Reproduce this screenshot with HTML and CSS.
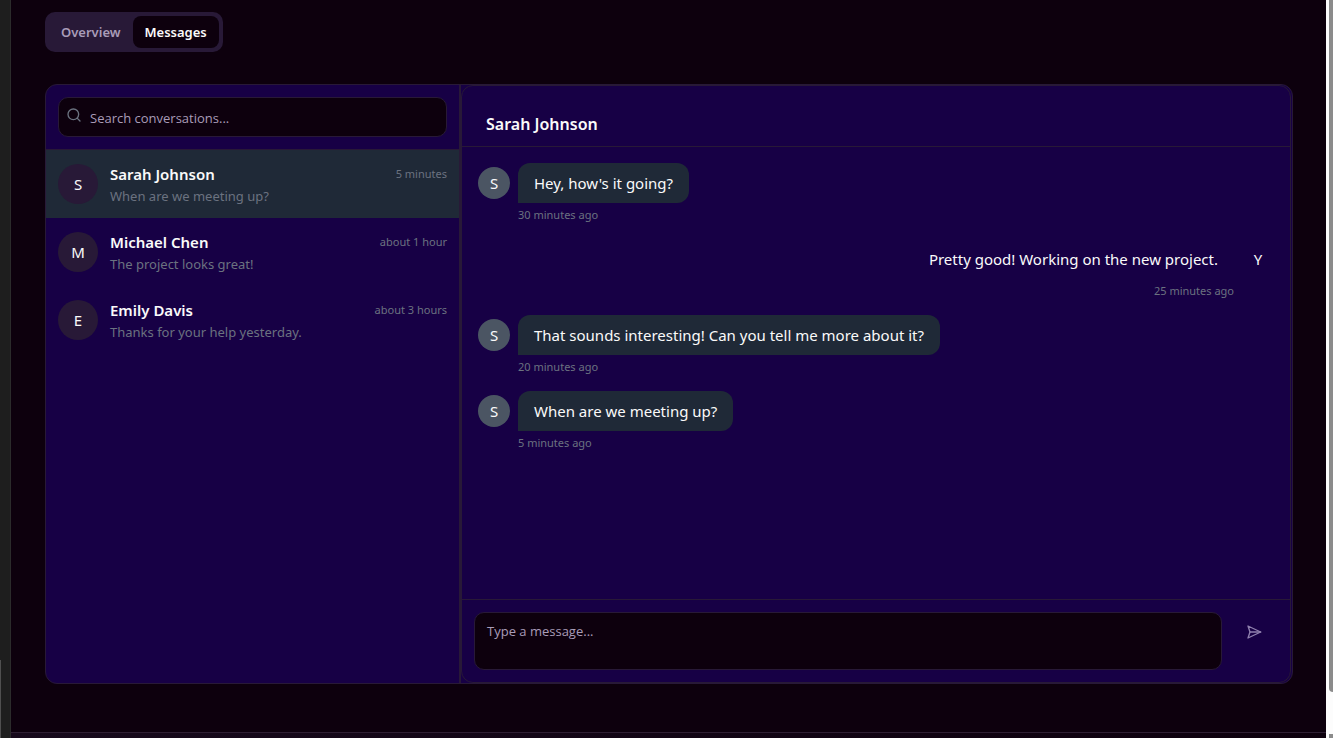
FILE: index.html
```html
<!DOCTYPE html>
<html lang="en">
<head>
<meta charset="utf-8">
<meta name="viewport" content="width=device-width, initial-scale=1">
<title>Messages</title>
<link rel="stylesheet" href="styles.css">
</head>
<body>
<div class="app">
  <div class="rail"><span class="rail-thumb"></span></div>
  <main class="page">
    <nav class="tabs" role="tablist">
      <button class="tab" type="button" role="tab" aria-selected="false">Overview</button>
      <button class="tab tab-active" type="button" role="tab" aria-selected="true">Messages</button>
    </nav>
    <section class="messenger">
      <aside class="sidebar">
        <div class="search">
          <svg class="search-icon" viewBox="0 0 24 24" aria-hidden="true"><circle cx="11" cy="11" r="8"/><path d="m21 21-4.3-4.3"/></svg>
          <input class="search-input" type="text" placeholder="Search conversations..." aria-label="Search conversations">
        </div>
        <ul class="conversations">
          <li class="conversation conversation-active">
            <span class="avatar">S</span>
            <div class="summary">
              <div class="summary-top"><span class="name">Sarah Johnson</span><span class="when">5 minutes</span></div>
              <p class="preview">When are we meeting up?</p>
            </div>
          </li>
          <li class="conversation">
            <span class="avatar">M</span>
            <div class="summary">
              <div class="summary-top"><span class="name">Michael Chen</span><span class="when">about 1 hour</span></div>
              <p class="preview">The project looks great!</p>
            </div>
          </li>
          <li class="conversation">
            <span class="avatar">E</span>
            <div class="summary">
              <div class="summary-top"><span class="name">Emily Davis</span><span class="when">about 3 hours</span></div>
              <p class="preview">Thanks for your help yesterday.</p>
            </div>
          </li>
        </ul>
      </aside>
      <section class="chat">
        <header class="chat-header"><h2 class="chat-title">Sarah Johnson</h2></header>
        <div class="thread">
          <article class="message">
            <span class="avatar avatar-small">S</span>
            <div class="message-body"><p class="bubble">Hey, how's it going?</p><span class="time">30 minutes ago</span></div>
          </article>
          <article class="message message-own">
            <span class="avatar avatar-small">Y</span>
            <div class="message-body"><p class="bubble">Pretty good! Working on the new project.</p><span class="time">25 minutes ago</span></div>
          </article>
          <article class="message">
            <span class="avatar avatar-small">S</span>
            <div class="message-body"><p class="bubble">That sounds interesting! Can you tell me more about it?</p><span class="time">20 minutes ago</span></div>
          </article>
          <article class="message">
            <span class="avatar avatar-small">S</span>
            <div class="message-body"><p class="bubble">When are we meeting up?</p><span class="time">5 minutes ago</span></div>
          </article>
        </div>
        <form class="composer">
          <textarea class="composer-input" placeholder="Type a message..." aria-label="Type a message"></textarea>
          <button class="send" type="button" aria-label="Send message">
            <svg class="send-icon" viewBox="0 0 24 24" aria-hidden="true"><path d="m3 3 3 9-3 9 19-9Z"/><path d="M6 12h16"/></svg>
          </button>
        </form>
      </section>
    </section>
    <footer class="footer"></footer>
  </main>
  <div class="scrollbar"><span class="scroll-thumb"></span><span class="scroll-end"></span></div>
</div>
</body>
</html>
```
FILE: styles.css
```css
:root {
  --bg: #0d000d;
  --panel: #170045;
  --line: #281937;
  --muted: #6b7280;
  --soft: #a99cb8;
  --active: #1f2937;
}

* { box-sizing: border-box; }

body {
  margin: 0;
  background: var(--bg);
  color: #fafafa;
  font-family: "Segoe UI", "Noto Sans", "Open Sans", sans-serif;
  font-size: 15px;
  line-height: 24px;
}

button, input, textarea { font: inherit; color: inherit; }
p, h2, ul { margin: 0; padding: 0; }

.app {
  display: flex;
  min-height: 100vh;
}

.rail {
  display: flex;
  align-items: flex-end;
  flex: 0 0 11px;
  background: #1e1e1e;
  border-right: 1px solid #2b2b2b;
}

.rail-thumb {
  width: 1px;
  height: 78px;
  background: #4f4f4f;
}

.page {
  display: flex;
  flex-direction: column;
  align-items: stretch;
  flex: 1;
  min-width: 0;
  padding-top: 12px;
}

.tabs {
  display: flex;
  align-self: flex-start;
  margin: 0 34px 32px;
  padding: 4px;
  background: var(--line);
  border-radius: 10px;
}

.tab {
  height: 32px;
  padding: 0 12px;
  border: 0;
  border-radius: 8px;
  background: transparent;
  color: var(--soft);
  font-size: 13px;
  font-weight: 600;
  line-height: 20px;
}

.tab-active {
  background: var(--bg);
  color: #fafafa;
}

.messenger {
  display: grid;
  grid-template-columns: 1fr 2fr;
  min-height: 600px;
  margin: 0 33px 48px 34px;
  padding-right: 1px;
  overflow: hidden;
  background: var(--panel);
  border: 1px solid var(--line);
  border-radius: 12px;
}

.sidebar { border-right: 2px solid var(--line); }

.search {
  position: relative;
  padding: 12px;
  border-bottom: 1px solid var(--line);
}

.search-icon {
  position: absolute;
  top: 22px;
  left: 20px;
  width: 16px;
  height: 16px;
  fill: none;
  stroke: var(--muted);
  stroke-width: 2;
  stroke-linecap: round;
  stroke-linejoin: round;
}

.search-input {
  display: block;
  width: 100%;
  height: 40px;
  padding: 1px 12px 0 31px;
  background: var(--bg);
  border: 1px solid var(--line);
  border-radius: 10px;
}

.search-input,
.composer-input {
  font-family: "Segoe UI", "Open Sans", "Noto Sans", sans-serif;
  font-size: 13px;
  line-height: 20px;
}

.search-input::placeholder,
.composer-input::placeholder {
  color: var(--soft);
  opacity: 1;
}

.conversations { list-style: none; }

.conversation {
  display: flex;
  align-items: center;
  gap: 12px;
  height: 68px;
  padding: 12px;
}

.conversation-active { background: var(--active); }

.avatar {
  display: flex;
  align-items: center;
  justify-content: center;
  flex: none;
  width: 40px;
  height: 40px;
  border-radius: 50%;
  background: var(--line);
}

.summary { flex: 1; min-width: 0; }

.summary-top {
  display: flex;
  align-items: center;
  justify-content: space-between;
}

.name { font-weight: 600; }

.when, .time {
  color: var(--muted);
  font-size: 11px;
  line-height: 16px;
}

.preview {
  color: var(--muted);
  font-size: 13px;
  line-height: 20px;
}

.chat {
  display: flex;
  flex-direction: column;
  min-width: 0;
  border: 1px solid var(--line);
  border-radius: 12px;
}

.chat-header {
  padding: 24px 24px 8px;
  border-bottom: 1px solid var(--line);
}

.chat-title {
  font-size: 16px;
  font-weight: 600;
  line-height: 28px;
}

.thread {
  display: flex;
  flex-direction: column;
  flex: 1;
  gap: 16px;
  padding: 16px;
}

.message {
  display: flex;
  align-items: flex-start;
  gap: 8px;
}

.message-own { flex-direction: row-reverse; }

.avatar-small {
  width: 32px;
  height: 32px;
  margin-top: 4px;
  background: #4b5563;
}

.message-body {
  display: flex;
  flex-direction: column;
  align-items: flex-start;
  gap: 4px;
}

.bubble {
  padding: 8px 16px;
  background: var(--active);
  border-radius: 12px 12px 12px 0;
}

.message-own .message-body { align-items: flex-end; }
.message-own .bubble, .message-own .avatar { background: transparent; }

.composer {
  display: flex;
  align-items: flex-start;
  gap: 8px;
  padding: 12px;
  border-top: 1px solid var(--line);
}

.composer-input {
  display: block;
  flex: 1;
  min-width: 0;
  height: 58px;
  padding: 8px 12px;
  background: var(--bg);
  border: 1px solid var(--line);
  border-radius: 10px;
  resize: none;
}

.send {
  display: flex;
  align-items: center;
  justify-content: center;
  width: 48px;
  height: 40px;
  padding: 0;
  border: 0;
  background: transparent;
  color: #9080ae;
}

.send-icon {
  width: 16px;
  height: 16px;
  fill: none;
  stroke: currentColor;
  stroke-width: 2;
  stroke-linecap: round;
  stroke-linejoin: round;
}

.footer {
  flex: 1;
  min-height: 6px;
  border-top: 1px solid #2e1f33;
  background: linear-gradient(90deg, #170a1c, var(--bg));
}

.scrollbar {
  display: flex;
  flex-direction: column;
  justify-content: space-between;
  align-items: flex-end;
  flex: 0 0 7px;
  background: #fcfcfc;
}

.scroll-thumb {
  width: 4px;
  height: 692px;
  background: #8b8b8b;
  border-bottom-left-radius: 4px;
}

.scroll-end {
  width: 4px;
  height: 4px;
  background: #8b8b8b;
}
```
